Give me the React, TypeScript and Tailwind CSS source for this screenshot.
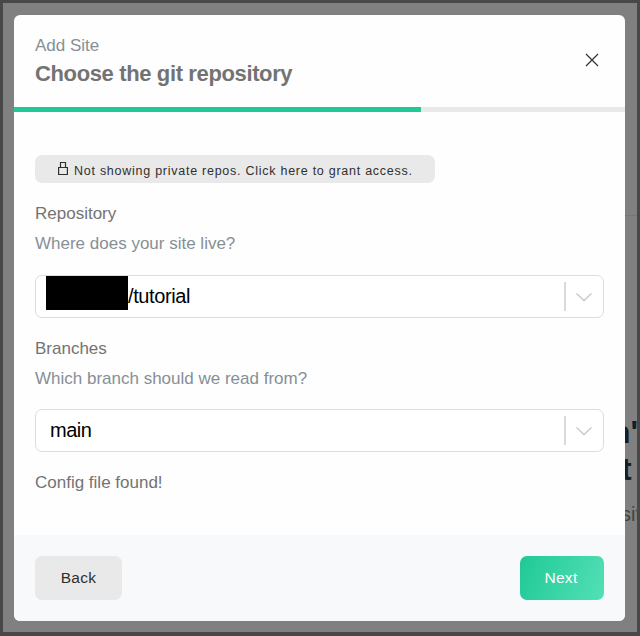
import type { ReactNode } from "react";

function Chevron() {
  return (
    <svg className="h-4 w-4 shrink-0" viewBox="0 0 16 16" fill="none" stroke="#c8c8c8" strokeWidth="1.3">
      <path d="M.5 4.5 8 11.5l7.5-7" />
    </svg>
  );
}

function Select({ children }: { children: ReactNode }) {
  return (
    <div className="flex h-[43px] w-[569px] shrink-0 items-center rounded-[7px] border border-[#dcdcdc] bg-white text-[20px] text-black">
      <div className="flex flex-1 items-center">{children}</div>
      <div className="h-[29px] w-[2px] bg-[#dadada]" />
      <div className="flex w-[37px] items-center pl-[10px]">
        <Chevron />
      </div>
    </div>
  );
}

function Backdrop() {
  return (
    <div className="absolute inset-0 overflow-hidden border-t-[3px] border-r-[3px] border-b-4 border-l-[3px] border-[#494849] bg-[#808080]">
      <div className="absolute top-[212px] right-0 h-px w-3 bg-[#757575]" />
      <div className="absolute top-[409px] left-[608px] text-[32px] leading-[40px] font-bold text-[#171e22]">n'</div>
      <div className="absolute top-[446px] left-[618px] text-[32px] leading-[40px] font-bold text-[#171e22]">t</div>
      <div className="absolute top-[499px] left-[618px] text-[20px] leading-[24px] text-[#434343]">sit</div>
    </div>
  );
}

export default function App() {
  return (
    <div className="relative h-[636px] w-[640px] overflow-hidden pt-[15px] pl-[14px] font-['Liberation_Sans',Arial,sans-serif]">
      <Backdrop />
      <main className="relative flex h-[606px] w-[611px] flex-col overflow-hidden rounded-[6px] bg-[#fefefe]">
        <header className="flex h-[92px] justify-between pt-[20px] pr-[25px] pl-[21px]">
          <div>
            <p className="h-[24px] text-[17px] leading-[22px] text-[#878f96]">Add Site</p>
            <h1 className="text-[22px] leading-[29px] font-bold tracking-[-.37px] text-[#737373]">Choose the git repository</h1>
          </div>
          <button aria-label="Close" className="mt-[16.5px] mr-[.5px] h-4 w-4">
            <svg viewBox="0 0 16 16" fill="none" stroke="#303238" strokeWidth="1.2">
              <path d="m2 2 12 12M14 2 2 14" />
            </svg>
          </button>
        </header>
        <div className="h-[5px] bg-[#e9e9e9]">
          <div className="h-full w-[407px] bg-[#20c997]" />
        </div>
        <section className="flex flex-1 flex-col items-start pt-[43px] pl-[21px]">
          <button className="flex h-[28px] w-[400px] items-center rounded-[7px] bg-[#e9e9e9] pl-[22px] text-[12.5px] tracking-[.74px] text-[#303030]">
            <svg className="mr-[5px] h-[14px] w-[12px] shrink-0" viewBox="0 0 12 14" fill="none" stroke="#303030" strokeWidth="1.2">
              <path d="M1.6 5.5h8.8v7H1.6zM3.5 5.5v-5h5v5" />
            </svg>
            <span className="relative top-[2px] whitespace-nowrap">Not showing private repos. Click here to grant access.</span>
          </button>
          <h2 className="mt-[20px] h-[30px] text-[17px] leading-[22px] text-[#737373]">Repository</h2>
          <p className="h-[42px] text-[17px] leading-[22px] text-[#878f96]">Where does your site live?</p>
          <Select>
            <span className="mb-[8px] ml-[10px] h-[34px] w-[82px] bg-black" />
            <span className="mb-[2px] tracking-[-.4px]">/tutorial</span>
          </Select>
          <h2 className="mt-[20px] h-[30px] text-[17px] leading-[22px] text-[#737373]">Branches</h2>
          <p className="h-[41px] text-[17px] leading-[22px] text-[#878f96]">Which branch should we read from?</p>
          <Select>
            <span className="mb-[2px] ml-[14px] tracking-[-.5px]">main</span>
          </Select>
          <p className="mt-[20px] text-[17px] leading-[22px] text-[#737373]">Config file found!</p>
        </section>
        <footer className="flex h-[86px] items-start justify-between bg-[#f8f9fb] pt-[21px] pr-[21px] pl-[21px]">
          <button className="h-[44px] w-[87px] rounded-[7px] bg-[#e9e9e9] text-[15.5px] tracking-[.3px] text-[#303030]">Back</button>
          <button className="h-[44px] w-[84px] rounded-[7px] bg-[linear-gradient(110deg,#20c997,#53e0b6)] pr-[2px] text-[15.5px] tracking-[.3px] text-white">Next</button>
        </footer>
      </main>
    </div>
  );
}
